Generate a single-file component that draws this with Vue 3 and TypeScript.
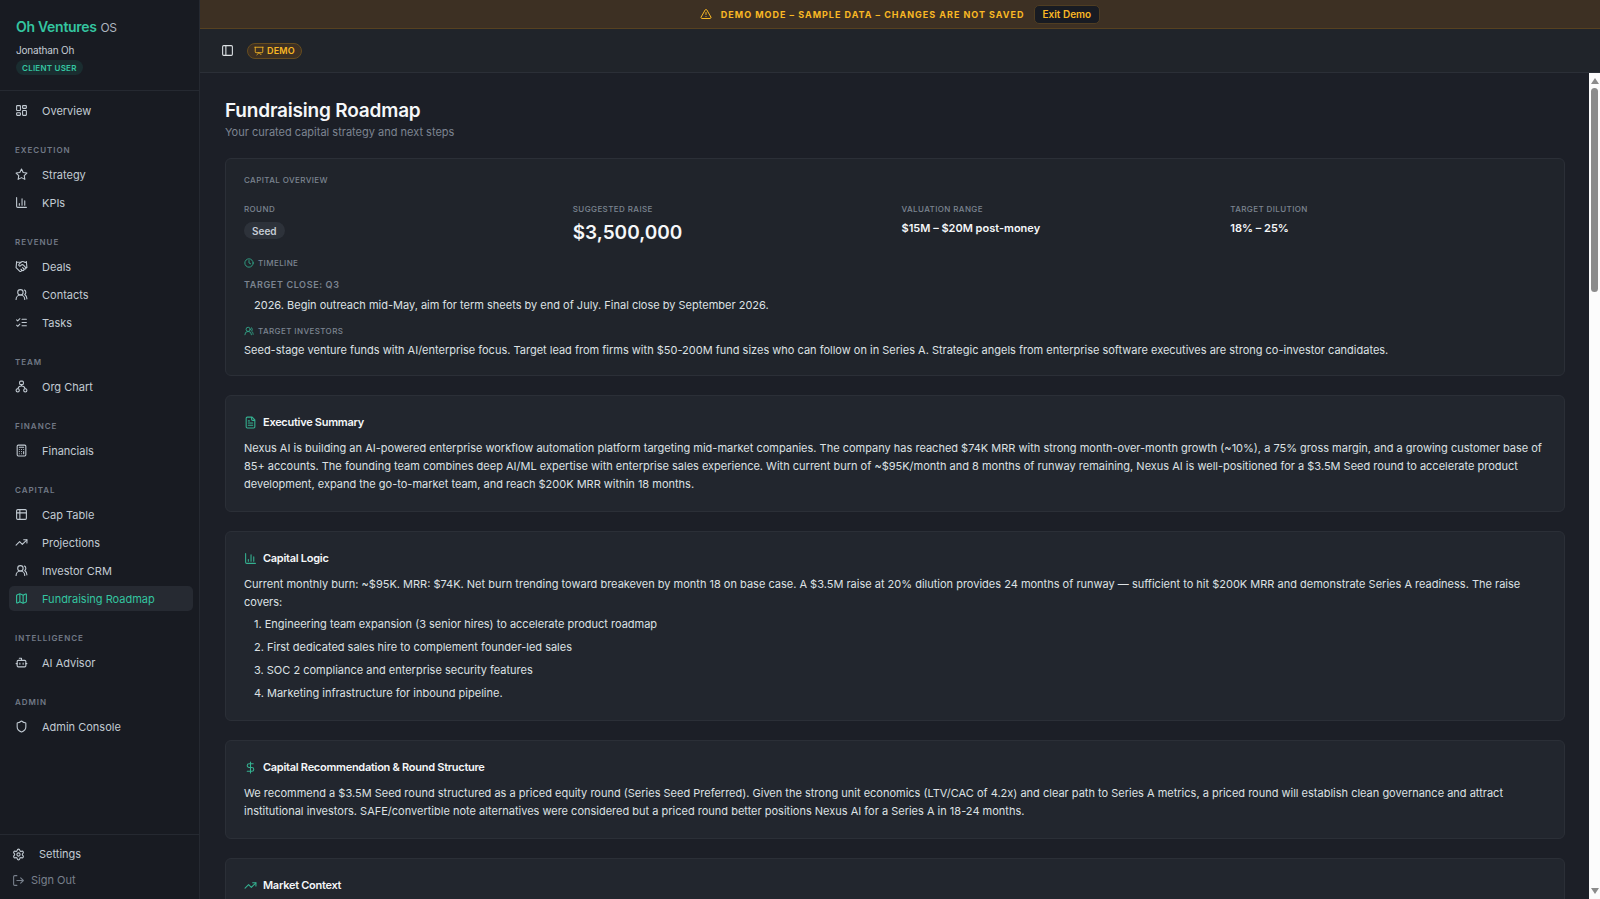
<script setup lang="ts">
interface NavItem { label: string; icon: string; active?: boolean }
interface NavGroup { title: string; items: NavItem[] }
interface Section { title: string; icon: string; body: string; steps?: string[] }

const icons: Record<string, string> = {
  dashboard: '<rect width="7" height="9" x="3" y="3" rx="1"/><rect width="7" height="5" x="14" y="3" rx="1"/><rect width="7" height="9" x="14" y="12" rx="1"/><rect width="7" height="5" x="3" y="16" rx="1"/>',
  star: '<path d="M12 2l3.09 6.26L22 9.27l-5 4.87 1.18 6.88L12 17.77l-6.18 3.25L7 14.14 2 9.27l6.91-1.01z"/>',
  chart: '<path d="M3 3v16a2 2 0 0 0 2 2h16M18 17V9M13 17V5M8 17v-3"/>',
  handshake: '<path d="m11 17 2 2a1 1 0 1 0 3-3"/><path d="m14 14 2.5 2.5a1 1 0 1 0 3-3l-3.88-3.88a3 3 0 0 0-4.24 0l-.88.88a1 1 0 1 1-3-3l2.81-2.81a5.79 5.79 0 0 1 7.06-.87l.47.28a2 2 0 0 0 1.42.25L21 4"/><path d="m21 3 1 11h-2M3 3 2 14l6.5 6.5a1 1 0 1 0 3-3M3 4h8"/>',
  users: '<path d="M18 21a8 8 0 0 0-16 0"/><circle cx="10" cy="8" r="5"/><path d="M22 20c0-3.37-2-6.5-4-8a5 5 0 0 0-.45-8.3"/>',
  tasks: '<path d="m3 17 2 2 4-4M3 7l2 2 4-4M13 6h8M13 12h8M13 18h8"/>',
  org: '<rect x="8.5" y="2" width="7" height="6.5" rx="2"/><path d="M12 8.500v2.500M5.500 16c.5-3 3-5 6.500-5s6 2 6.500 5"/><circle cx="5" cy="19" r="3"/><circle cx="19" cy="19" r="3"/>',
  calculator: '<rect width="16" height="20" x="4" y="2" rx="2"/><path d="M8 6h8M16 14v4M16 10h.01M12 10h.01M8 10h.01M12 14h.01M8 14h.01M12 18h.01M8 18h.01"/>',
  table: '<rect width="18" height="18" x="3" y="3" rx="2"/><path d="M9 3v18M3 9h18"/>',
  trend: '<path d="m22 7-8.5 8.5-5-5L2 17"/><path d="M16 7h6v6"/>',
  map: '<path d="M14.106 5.553a2 2 0 0 0 1.788 0l3.659-1.83A1 1 0 0 1 21 4.619v12.764a1 1 0 0 1-.553.894l-4.553 2.277a2 2 0 0 1-1.788 0l-4.212-2.106a2 2 0 0 0-1.788 0l-3.659 1.83A1 1 0 0 1 3 19.381V6.618a1 1 0 0 1 .553-.894l4.553-2.277a2 2 0 0 1 1.788 0zM15 5.764v15M9 3.236v15"/>',
  bot: '<path d="M12 8V4H8"/><rect width="16" height="12" x="4" y="8" rx="2"/><path d="M2 14h2M20 14h2M15 13v2M9 13v2"/>',
  shield: '<path d="M20 13c0 5-3.5 7.5-7.66 8.95a1 1 0 0 1-.67-.01C7.5 20.5 4 18 4 13V6a1 1 0 0 1 1-1c2 0 4.5-1.2 6.24-2.72a1.17 1.17 0 0 1 1.52 0C14.51 3.81 17 5 19 5a1 1 0 0 1 1 1z"/>',
  settings: '<path d="M9.671 4.136a2.34 2.34 0 0 1 4.659 0 2.34 2.34 0 0 0 3.319 1.915 2.34 2.34 0 0 1 2.33 4.033 2.34 2.34 0 0 0 0 3.831 2.34 2.34 0 0 1-2.33 4.033 2.34 2.34 0 0 0-3.319 1.915 2.34 2.34 0 0 1-4.659 0 2.34 2.34 0 0 0-3.32-1.915 2.34 2.34 0 0 1-2.33-4.033 2.34 2.34 0 0 0 0-3.831A2.34 2.34 0 0 1 6.35 6.051a2.34 2.34 0 0 0 3.319-1.915"/><circle cx="12" cy="12" r="3"/>',
  logout: '<path d="M9 21H5a2 2 0 0 1-2-2V5a2 2 0 0 1 2-2h4M16 17l5-5-5-5M21 12H9"/>',
  panel: '<rect width="18" height="18" x="3" y="3" rx="2"/><path d="M9 3v18"/>',
  presentation: '<path d="M2 3h20M21 3v11a2 2 0 0 1-2 2H5a2 2 0 0 1-2-2V3M7 21l5-5 5 5"/>',
  alert: '<path d="m21.73 18-8-14a2 2 0 0 0-3.48 0l-8 14A2 2 0 0 0 4 21h16a2 2 0 0 0 1.73-3M12 9v4M12 17h.01"/>',
  clock: '<circle cx="12" cy="12" r="10"/><path d="M12 6v6l4 2"/>',
  file: '<path d="M15 2H6a2 2 0 0 0-2 2v16a2 2 0 0 0 2 2h12a2 2 0 0 0 2-2V7zM14 2v4a2 2 0 0 0 2 2h4M10 9H8M16 13H8M16 17H8"/>',
  dollar: '<path d="M12 2v20M17 5H9.5a3.5 3.5 0 0 0 0 7h5a3.5 3.5 0 0 1 0 7H6"/>',
}

const groups: NavGroup[] = [
  { title: 'Execution', items: [{ label: 'Strategy', icon: 'star' }, { label: 'KPIs', icon: 'chart' }] },
  { title: 'Revenue', items: [{ label: 'Deals', icon: 'handshake' }, { label: 'Contacts', icon: 'users' }, { label: 'Tasks', icon: 'tasks' }] },
  { title: 'Team', items: [{ label: 'Org Chart', icon: 'org' }] },
  { title: 'Finance', items: [{ label: 'Financials', icon: 'calculator' }] },
  { title: 'Capital', items: [{ label: 'Cap Table', icon: 'table' }, { label: 'Projections', icon: 'trend' }, { label: 'Investor CRM', icon: 'users' }, { label: 'Fundraising Roadmap', icon: 'map', active: true }] },
  { title: 'Intelligence', items: [{ label: 'AI Advisor', icon: 'bot' }] },
  { title: 'Admin', items: [{ label: 'Admin Console', icon: 'shield' }] },
]

const sections: Section[] = [
  { title: 'Executive Summary', icon: 'file', body: 'Nexus AI is building an AI-powered enterprise workflow automation platform targeting mid-market companies. The company has reached $74K MRR with strong month-over-month growth (~10%), a 75% gross margin, and a growing customer base of 85+ accounts. The founding team combines deep AI/ML expertise with enterprise sales experience. With current burn of ~$95K/month and 8 months of runway remaining, Nexus AI is well-positioned for a $3.5M Seed round to accelerate product development, expand the go-to-market team, and reach $200K MRR within 18 months.' },
  { title: 'Capital Logic', icon: 'chart', body: 'Current monthly burn: ~$95K. MRR: $74K. Net burn trending toward breakeven by month 18 on base case. A $3.5M raise at 20% dilution provides 24 months of runway — sufficient to hit $200K MRR and demonstrate Series A readiness. The raise covers:',
    steps: ['Engineering team expansion (3 senior hires) to accelerate product roadmap', 'First dedicated sales hire to complement founder-led sales', 'SOC 2 compliance and enterprise security features', 'Marketing infrastructure for inbound pipeline.'] },
  { title: 'Capital Recommendation & Round Structure', icon: 'dollar', body: 'We recommend a $3.5M Seed round structured as a priced equity round (Series Seed Preferred). Given the strong unit economics (LTV/CAC of 4.2x) and clear path to Series A metrics, a priced round will establish clean governance and attract institutional investors. SAFE/convertible note alternatives were considered but a priced round better positions Nexus AI for a Series A in 18-24 months.' },
  { title: 'Market Context', icon: 'trend', body: '' },
]
</script>

<template>
  <div class="app">
    <aside class="sidebar">
      <div class="brand">
        <div class="logo"><strong>Oh Ventures</strong> <span>OS</span></div>
        <div class="user">Jonathan Oh</div>
        <span class="role">CLIENT USER</span>
      </div>
      <nav class="nav">
        <a href="#" class="item"><svg class="icon" viewBox="0 0 24 24" v-html="icons.dashboard" /><span>Overview</span></a>
        <section v-for="g in groups" :key="g.title" class="group">
          <h2 class="group-title">{{ g.title }}</h2>
          <a v-for="i in g.items" :key="i.label" href="#" class="item" :class="{ active: i.active }">
            <svg class="icon" viewBox="0 0 24 24" v-html="icons[i.icon]" /><span>{{ i.label }}</span>
          </a>
        </section>
      </nav>
      <div class="foot">
        <a href="#" class="foot-item settings"><svg class="icon" viewBox="0 0 24 24" v-html="icons.settings" />Settings</a>
        <button type="button" class="foot-item signout"><svg class="icon" viewBox="0 0 24 24" v-html="icons.logout" />Sign Out</button>
      </div>
    </aside>

    <div class="page">
      <div class="banner">
        <svg class="icon small" viewBox="0 0 24 24" v-html="icons.alert" />
        <span class="banner-text">DEMO MODE – SAMPLE DATA – CHANGES ARE NOT SAVED</span>
        <button type="button" class="exit">Exit Demo</button>
      </div>
      <header class="topbar">
        <button type="button" class="toggle" aria-label="Toggle sidebar"><svg class="icon" viewBox="0 0 24 24" v-html="icons.panel" /></button>
        <span class="demo"><svg class="icon tiny" viewBox="0 0 24 24" v-html="icons.presentation" />DEMO</span>
      </header>
      <div class="viewport">
        <main class="content">
          <h1>Fundraising Roadmap</h1>
          <p class="subtitle">Your curated capital strategy and next steps</p>

          <section class="card overview">
            <h2 class="label">Capital Overview</h2>
            <dl class="stats">
              <div><dt class="label">Round</dt><dd><span class="pill">Seed</span></dd></div>
              <div><dt class="label">Suggested Raise</dt><dd class="big">$3,500,000</dd></div>
              <div><dt class="label">Valuation Range</dt><dd class="value">$15M – $20M post-money</dd></div>
              <div><dt class="label">Target Dilution</dt><dd class="value">18% – 25%</dd></div>
            </dl>
            <h3 class="label with-icon"><svg class="icon tiny" viewBox="0 0 24 24" v-html="icons.clock" />Timeline</h3>
            <h4 class="close">Target close: Q3</h4>
            <p class="text indent">2026. Begin outreach mid-May, aim for term sheets by end of July. Final close by September 2026.</p>
            <h3 class="label with-icon investors"><svg class="icon tiny" viewBox="0 0 24 24" v-html="icons.users" />Target Investors</h3>
            <p class="text">Seed-stage venture funds with AI/enterprise focus. Target lead from firms with $50-200M fund sizes who can follow on in Series A. Strategic angels from enterprise software executives are strong co-investor candidates.</p>
          </section>

          <section v-for="s in sections" :key="s.title" class="card">
            <h2 class="card-title"><svg class="icon" viewBox="0 0 24 24" v-html="icons[s.icon]" />{{ s.title }}</h2>
            <p v-if="s.body" class="text">{{ s.body }}</p>
            <ol v-if="s.steps" class="steps text">
              <li v-for="(step, n) in s.steps" :key="step">{{ n + 1 }}. {{ step }}</li>
            </ol>
          </section>
        </main>
        <div class="scrollbar" aria-hidden="true">
          <span class="arrow up"></span>
          <span class="thumb"></span>
          <span class="arrow down"></span>
        </div>
      </div>
    </div>
  </div>
</template>

<style>
body { background: #1c1f27; }
</style>

<style scoped>
* { box-sizing: border-box; margin: 0; padding: 0; }
.app { display: flex; height: 100vh; overflow: hidden; background: #1c1f27; color: #dde1e4; font-family: Inter, "Liberation Sans", sans-serif; font-size: 11px; }
a { color: inherit; text-decoration: none; }
button { font: inherit; color: inherit; border: 0; background: none; cursor: pointer; }
.icon { flex: none; width: 13px; height: 13px; fill: none; stroke: currentColor; stroke-width: 2; stroke-linecap: round; stroke-linejoin: round; }
.icon.small { width: 12px; height: 12px; }
.icon.tiny { width: 10px; height: 10px; }

.sidebar { display: flex; flex-direction: column; flex: none; width: 200px; background: #181b22; border-right: 1px solid #252931; }
.brand { height: 91px; padding: 17px 16px 0; border-bottom: 1px solid #252931; }
.logo { font-size: 14px; line-height: 20px; letter-spacing: -0.02em; color: #aeb5bf; }
.logo strong { font-weight: 600; color: #34c5a0; }
.logo span { font-size: 12px; }
.user { margin-top: 5px; font-size: 10px; line-height: 15px; letter-spacing: -0.02em; color: #c5ccd5; }
.role { display: flex; align-items: center; width: fit-content; margin-top: 2px; height: 15px; padding: 0 6px; border-radius: 8px; background: #1a2d30; color: #34c5a0; font-size: 8px; font-weight: 600; letter-spacing: 0.03em; }
.nav { flex: 1; padding: 7px 6px 0 9px; }
.item { display: flex; align-items: center; gap: 14px; height: 25px; padding: 0 6px; margin-bottom: 3px; border-radius: 5px; color: #c2cbd3; }
.item.active { background: #262a32; color: #34c5a0; }
.group { padding-top: 14px; }
.group-title { height: 22px; padding-left: 6px; font-size: 8px; line-height: 20px; font-weight: 600; letter-spacing: 0.12em; text-transform: uppercase; color: #717986; }
.foot { display: flex; flex-direction: column; align-items: flex-start; height: 65px; padding: 6px 12px 0; border-top: 1px solid #252931; }
.foot-item { display: flex; align-items: center; height: 26px; color: #c2cbd3; }
.settings { gap: 14px; }
.signout { gap: 6px; color: #78808c; }

.page { display: flex; flex-direction: column; flex: 1; min-width: 0; }
.banner { display: flex; align-items: center; justify-content: center; height: 29px; flex: none; background: #3d3023; border-bottom: 1px solid #574120; color: #f9b824; }
.banner-text { margin: 0 9px; font-size: 9px; font-weight: 700; letter-spacing: 0.11em; }
.exit { height: 19px; padding: 0 8px; border: 1px solid #4f3d22; border-radius: 5px; background: #181b22; font-size: 10px; font-weight: 600; }
.topbar { display: flex; align-items: center; gap: 13px; height: 44px; flex: none; padding: 0 21px; background: #20242a; border-bottom: 1px solid #2b2f37; }
.toggle { display: flex; color: #dde1e4; }
.demo { display: inline-flex; align-items: center; gap: 3px; height: 16px; padding: 0 6px; border: 1px solid #664c1f; border-radius: 8px; background: #3d3023; color: #f9b824; font-size: 9px; font-weight: 600; letter-spacing: 0.02em; }

.viewport { display: flex; flex: 1; min-height: 0; }
.content { flex: 1; min-width: 0; overflow: hidden; padding: 25px 24px 24px 25px; }
h1 { font-size: 19px; line-height: 25px; font-weight: 600; letter-spacing: -0.01em; color: #f5f7f9; }
.subtitle { margin-bottom: 17px; line-height: 18px; color: #7c8491; }
.card { margin-bottom: 19px; padding: 17px 18px 18px; border: 1px solid #2b2f37; border-radius: 6px; background: #22262e; }
.card.overview { background: #20242b; padding-top: 13px; padding-bottom: 16px; }
.label { font-size: 8px; line-height: 16px; font-weight: 500; letter-spacing: 0.05em; text-transform: uppercase; color: #7c8491; }
.stats { display: grid; grid-template-columns: repeat(4, 1fr); gap: 13px; margin: 13px 0 10px; height: 44px; }
.pill { display: inline-flex; align-items: center; height: 17px; margin-top: 5px; padding: 0 8px; border-radius: 9px; background: #2d323a; color: #c5ccd5; font-size: 10px; font-weight: 600; }
.big { font-size: 19px; line-height: 32px; font-weight: 600; color: #f5f7f9; }
.value { margin-top: 2px; line-height: 18px; font-weight: 600; color: #f5f7f9; }
.with-icon { display: flex; align-items: center; gap: 4px; }
.with-icon .icon, .card-title .icon { color: #34b090; }
.close { margin: 6px 0 3px; font-size: 9px; line-height: 16px; font-weight: 600; letter-spacing: 0.07em; text-transform: uppercase; color: #7c8491; }
.text { font-size: 11px; line-height: 18px; color: #dde1e4; }
.indent { padding-left: 10px; }
.investors { margin-top: 9px; margin-bottom: 2px; }
.card-title { display: flex; align-items: center; gap: 6px; margin-bottom: 8px; font-size: 11px; line-height: 18px; font-weight: 600; letter-spacing: -0.025em; color: #f5f7f9; }
.steps { display: grid; gap: 5px; margin-top: 4px; padding-left: 10px; list-style: none; }

.scrollbar { display: flex; flex-direction: column; align-items: center; flex: none; width: 11px; padding: 5px 0; background: #fcfcfc; }
.arrow { border: 4px solid transparent; border-top: 0; border-bottom: 6px solid #8b8b8b; }
.arrow.down { margin-top: auto; border-top: 6px solid #8b8b8b; border-bottom: 0; }
.thumb { width: 7px; height: 25%; margin-top: 4px; border-radius: 4px; background: #8b8b8b; }
</style>
